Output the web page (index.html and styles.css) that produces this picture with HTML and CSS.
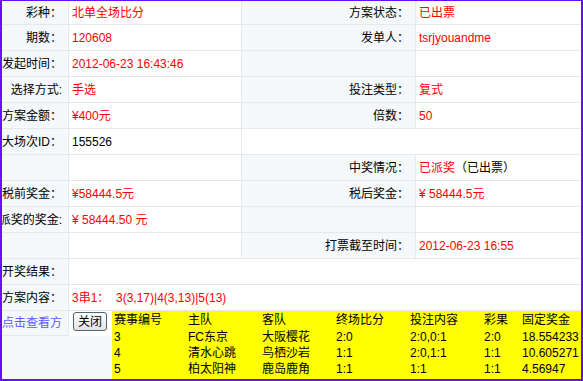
FILE: index.html
```html
<!DOCTYPE html>
<html>
<head>
<meta charset="utf-8">
<link rel="stylesheet" href="styles.css">
</head>
<body>
<div class="frame">
  <div class="grid">
    <div class="l"><span>彩种：</span></div><div class="v red">北单全场比分</div><div class="l"><span>方案状态：</span></div><div class="v red last">已出票</div>
    <div class="l"><span>期数：</span></div><div class="v red">120608</div><div class="l"><span>发单人：</span></div><div class="v red last">tsrjyouandme</div>
    <div class="l"><span>发起时间：</span></div><div class="v red">2012-06-23 16:43:46</div><div class="l"></div><div class="v last"></div>
    <div class="l"><span>选择方式:</span></div><div class="v red">手选</div><div class="l"><span>投注类型：</span></div><div class="v red last">复式</div>
    <div class="l"><span>方案金额：</span></div><div class="v red">¥400元</div><div class="l"><span>倍数：</span></div><div class="v red last">50</div>
    <div class="l"><span>最大场次ID：</span></div><div class="v">155526</div><div class="v span2 last"></div>
    <div class="l"></div><div class="v"></div><div class="l"><span>中奖情况：</span></div><div class="v last"><span class="red">已派奖</span>（已出票）</div>
    <div class="l"><span>税前奖金：</span></div><div class="v red">¥58444.5元</div><div class="l"><span>税后奖金：</span></div><div class="v red last">¥ 58444.5元</div>
    <div class="l"><span>已派奖的奖金:</span></div><div class="v red">¥ 58444.50 元</div><div class="l"></div><div class="v last"></div>
    <div class="l"></div><div class="v"></div><div class="l"><span>打票截至时间：</span></div><div class="v red last">2012-06-23 16:55</div>
    <div class="l"><span>开奖结果：</span></div><div class="v span3 last"></div>
    <div class="l"><span>方案内容：</span></div><div class="v span3 last red">3串1：&nbsp;&nbsp;3(3,17)|4(3,13)|5(13)</div>
    <div class="l link"><span>(点击查看方</span></div><div class="v span3 last btncell"><button class="btn">关闭</button></div>
  </div>
  <div class="popup">
    <div class="prow head"><span>赛事编号</span><span>主队</span><span>客队</span><span>终场比分</span><span>投注内容</span><span>彩果</span><span>固定奖金</span></div>
    <div class="prow"><span>3</span><span>FC东京</span><span>大阪樱花</span><span>2:0</span><span>2:0,0:1</span><span>2:0</span><span>18.554233</span></div>
    <div class="prow"><span>4</span><span>清水心跳</span><span>鸟栖沙岩</span><span>1:1</span><span>2:0,1:1</span><span>1:1</span><span>10.605271</span></div>
    <div class="prow"><span>5</span><span>柏太阳神</span><span>鹿岛鹿角</span><span>1:1</span><span>1:1</span><span>1:1</span><span>4.56947</span></div>
  </div>
</div>
</body>
</html>
```
FILE: styles.css
```css
html, body {
  margin: 0;
  padding: 0;
  background: #ffffff;
}
body {
  font-family: "Liberation Sans", "Noto Sans CJK SC", sans-serif;
  font-size: 12px;
  color: #000;
}
.frame {
  box-sizing: border-box;
  width: 583px;
  height: 382px;
  margin-top: -1px;
  border: 2px solid #6410ff;
  position: relative;
  background: #f5f8fb;
  overflow: hidden;
}
.grid {
  display: grid;
  grid-template-columns: 67px 173px 174px 1fr;
  grid-template-rows: 24px repeat(11, 26px) 25px;
}
.grid > div {
  box-sizing: border-box;
  border-right: 1px solid #e6e9ec;
  border-bottom: 1px solid #e6e9ec;
  white-space: nowrap;
  overflow: hidden;
  display: flex;
  align-items: center;
  line-height: 14px;
}
.grid > div.last {
  border-right: none;
}
.l {
  background: #f5f8fb;
  justify-content: flex-end;
  padding-right: 6px;
}
.l span {
  flex: none;
}
.v {
  background: #ffffff;
  padding-left: 3px;
}
.span2 { grid-column: span 2; }
.span3 { grid-column: span 3; }
.red { color: #ff0000; }
.link { color: #5a5aff; }
.grid > div.btncell {
  border-bottom: none;
  align-items: flex-start;
  padding-left: 4px;
  padding-top: 1px;
}
.btn {
  box-sizing: border-box;
  width: 34px;
  height: 19px;
  padding: 0;
  margin: 0;
  border: 1px solid #4e6478;
  border-radius: 3px;
  background: linear-gradient(#ffffff, #e3e3e3);
  font-family: "Liberation Sans", "Noto Sans CJK SC", sans-serif;
  font-size: 12px;
  line-height: 16px;
  color: #000;
}
.popup {
  position: absolute;
  left: 110px;
  top: 310px;
  right: 0;
  bottom: 0;
  background: #ffff00;
}
.prow {
  display: grid;
  grid-template-columns: 74px 74px 74px 74px 74px 38px 1fr;
  height: 16px;
  align-items: center;
  line-height: 14px;
}
.prow.head {
  height: 18px;
}
.prow span {
  padding-left: 2px;
  white-space: nowrap;
}
```
